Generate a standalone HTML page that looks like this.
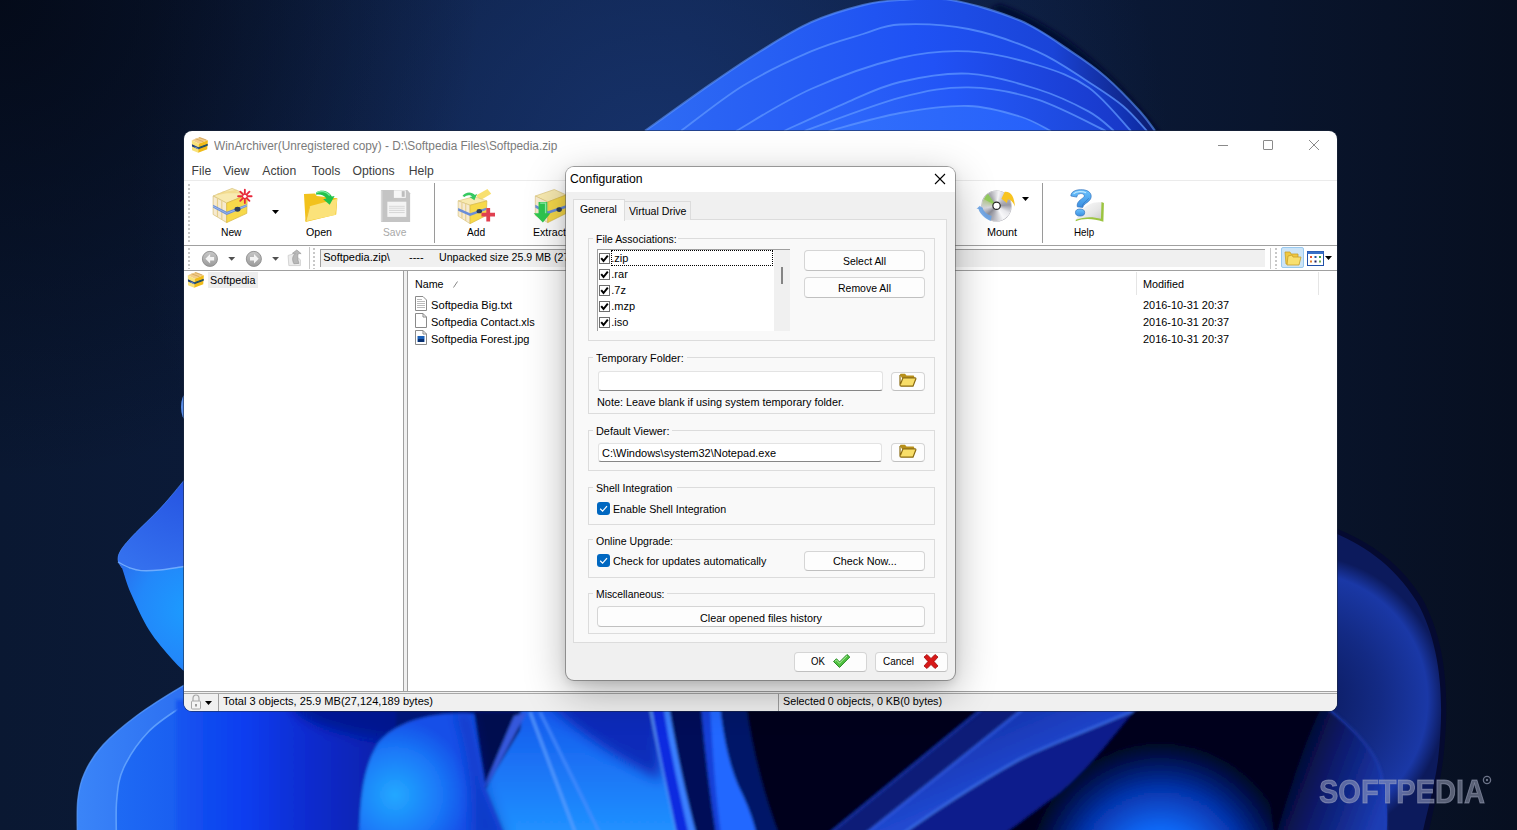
<!DOCTYPE html>
<html><head><meta charset="utf-8">
<style>
*{box-sizing:border-box;margin:0;padding:0}
html,body{width:1517px;height:830px;overflow:hidden;background:#0b1a36}
body{position:relative;font-family:"Liberation Sans",sans-serif;font-size:12px;color:#000}
.a{position:absolute}
.t{position:absolute;white-space:pre;line-height:1;transform-origin:0 0}
</style></head><body>
<svg class="a" style="left:0;top:0" width="1517" height="830" viewBox="0 0 1517 830">
<defs>
<linearGradient id="navy" x1="0" y1="0" x2="1517" y2="0" gradientUnits="userSpaceOnUse"><stop offset="0" stop-color="#0a1832"/><stop offset="0.45" stop-color="#0d1f44"/><stop offset="0.75" stop-color="#0a1834"/><stop offset="1" stop-color="#070f20"/></linearGradient>
<radialGradient id="navyHi" cx="650" cy="170" r="520" gradientUnits="userSpaceOnUse"><stop offset="0" stop-color="#17336c" stop-opacity=".95"/><stop offset="1" stop-color="#17336c" stop-opacity="0"/></radialGradient>
<radialGradient id="navyDk" cx="0" cy="0" r="480" gradientUnits="userSpaceOnUse"><stop offset="0" stop-color="#030815" stop-opacity=".85"/><stop offset="1" stop-color="#030815" stop-opacity="0"/></radialGradient>
<radialGradient id="lobeL" cx="190" cy="610" r="85" gradientUnits="userSpaceOnUse">
<stop offset="0" stop-color="#1c9cff"/><stop offset="0.6" stop-color="#2288fa"/><stop offset="1" stop-color="#2a6cec"/>
</radialGradient>
<radialGradient id="bright1" cx="395" cy="795" r="75" gradientUnits="userSpaceOnUse">
<stop offset="0" stop-color="#22a8ff"/><stop offset="0.6" stop-color="#1a78f8"/><stop offset="1" stop-color="#1450e8"/>
</radialGradient>
<radialGradient id="bright2" cx="1160" cy="840" r="120" gradientUnits="userSpaceOnUse">
<stop offset="0" stop-color="#0a78ff"/><stop offset="0.5" stop-color="#0848d0"/><stop offset="1" stop-color="#041040"/>
</radialGradient>
<radialGradient id="domeR" cx="1300" cy="700" r="145" gradientUnits="userSpaceOnUse"><stop offset="0" stop-color="#0a1858"/><stop offset="0.55" stop-color="#132a84"/><stop offset="0.88" stop-color="#1a38a6"/><stop offset="1" stop-color="#0c1a5c"/></radialGradient>
<filter id="bl1" x="-5%" y="-5%" width="110%" height="110%"><feGaussianBlur stdDeviation="1.5"/></filter>
<filter id="bl2"><feGaussianBlur stdDeviation="2"/></filter>
<filter id="bl6" x="-30%" y="-30%" width="160%" height="160%"><feGaussianBlur stdDeviation="6"/></filter>
<linearGradient id="p1" x1="645" y1="0" x2="1155" y2="0" gradientUnits="userSpaceOnUse"><stop offset="0" stop-color="#2f6cf4"/><stop offset="0.45" stop-color="#2054f2"/><stop offset="0.8" stop-color="#1a44d8"/><stop offset="1" stop-color="#0c1c70"/></linearGradient>
<linearGradient id="p2" x1="681" y1="0" x2="1147" y2="0" gradientUnits="userSpaceOnUse"><stop offset="0" stop-color="#2c66f4"/><stop offset="0.5" stop-color="#1f52f4"/><stop offset="0.85" stop-color="#1a46e0"/><stop offset="1" stop-color="#0e2aa0"/></linearGradient>
<linearGradient id="p3" x1="736" y1="0" x2="1131" y2="0" gradientUnits="userSpaceOnUse"><stop offset="0" stop-color="#2c64f6"/><stop offset="0.5" stop-color="#2152f6"/><stop offset="1" stop-color="#1838c8"/></linearGradient>
<linearGradient id="p4" x1="784" y1="0" x2="1114" y2="0" gradientUnits="userSpaceOnUse"><stop offset="0" stop-color="#2e68f8"/><stop offset="0.5" stop-color="#2254f6"/><stop offset="1" stop-color="#1a40d0"/></linearGradient>
<linearGradient id="p5" x1="804" y1="0" x2="1106" y2="0" gradientUnits="userSpaceOnUse"><stop offset="0" stop-color="#306cfa"/><stop offset="0.5" stop-color="#2458f8"/><stop offset="1" stop-color="#1c46d8"/></linearGradient>
<linearGradient id="p6" x1="828" y1="0" x2="1051" y2="0" gradientUnits="userSpaceOnUse"><stop offset="0" stop-color="#3270fc"/><stop offset="1" stop-color="#2660fa"/></linearGradient>
<filter id="bl05" x="-5%" y="-20%" width="110%" height="140%"><feGaussianBlur stdDeviation=".6"/></filter>
</defs>
<rect width="1517" height="830" fill="url(#navy)"/>
<rect width="1517" height="830" fill="url(#navyHi)"/>
<rect width="1517" height="830" fill="url(#navyDk)"/>
<!-- top dome petals -->
<path d="M1000,4 C1070,30 1120,80 1162,135 L1150,135 C1110,85 1060,40 990,8Z" fill="#040a30" filter="url(#bl2)"/>
<path d="M645.0,131.0 C655.6,123.5 689.3,99.0 708.5,85.7 C727.7,72.4 742.9,62.0 760.0,51.4 C777.1,40.8 793.8,30.0 811.0,22.3 C828.2,14.6 848.2,8.8 863.0,5.1 C877.8,1.4 885.3,0.8 900.0,0.0 C914.7,-0.8 931.0,-3.4 951.0,0.0 C971.0,3.4 1000.0,12.0 1020.0,20.6 C1040.0,29.2 1056.7,42.0 1071.0,51.4 C1085.3,60.8 1094.2,67.0 1105.7,77.0 C1117.2,87.0 1131.8,102.4 1140.0,111.4 C1148.2,120.4 1152.5,127.7 1155.0,131.0 L1155,140 L645,140 Z" fill="url(#p1)"/>
<path d="M645.0,131.0 C655.6,123.5 689.3,99.0 708.5,85.7 C727.7,72.4 742.9,62.0 760.0,51.4 C777.1,40.8 793.8,30.0 811.0,22.3 C828.2,14.6 848.2,8.8 863.0,5.1 C877.8,1.4 885.3,0.8 900.0,0.0 C914.7,-0.8 931.0,-3.4 951.0,0.0 C971.0,3.4 1000.0,12.0 1020.0,20.6 C1040.0,29.2 1056.7,42.0 1071.0,51.4 C1085.3,60.8 1094.2,67.0 1105.7,77.0 C1117.2,87.0 1131.8,102.4 1140.0,111.4 C1148.2,120.4 1152.5,127.7 1155.0,131.0" fill="none" stroke="#5d95ff" stroke-width="2.2" stroke-opacity="0.6" filter="url(#bl05)"/>
<path d="M681.0,131.0 C691.3,123.5 721.3,99.0 743.0,85.7 C764.7,72.4 791.0,60.0 811.0,51.4 C831.0,42.8 848.2,38.5 863.0,34.0 C877.8,29.5 882.4,25.3 900.0,24.5 C917.6,23.7 945.7,24.5 968.5,29.0 C991.3,33.5 1017.0,42.6 1037.0,51.4 C1057.0,60.2 1074.2,72.9 1088.5,82.0 C1102.8,91.1 1113.2,97.8 1123.0,106.0 C1132.8,114.2 1143.0,126.8 1147.0,131.0 L1147,140 L681,140 Z" fill="url(#p2)"/>
<path d="M681.0,131.0 C691.3,123.5 721.3,99.0 743.0,85.7 C764.7,72.4 791.0,60.0 811.0,51.4 C831.0,42.8 848.2,38.5 863.0,34.0 C877.8,29.5 882.4,25.3 900.0,24.5 C917.6,23.7 945.7,24.5 968.5,29.0 C991.3,33.5 1017.0,42.6 1037.0,51.4 C1057.0,60.2 1074.2,72.9 1088.5,82.0 C1102.8,91.1 1113.2,97.8 1123.0,106.0 C1132.8,114.2 1143.0,126.8 1147.0,131.0" fill="none" stroke="#5d95ff" stroke-width="1.8" stroke-opacity="0.75" filter="url(#bl05)"/>
<path d="M736.0,131.0 C748.5,124.0 783.7,101.2 811.0,89.0 C838.3,76.8 873.8,64.3 900.0,58.0 C926.2,51.7 945.7,50.2 968.5,51.4 C991.3,52.6 1017.0,59.0 1037.0,65.0 C1057.0,71.0 1072.8,76.4 1088.5,87.4 C1104.2,98.4 1123.9,123.7 1131.0,131.0 L1131,140 L736,140 Z" fill="url(#p3)"/>
<path d="M736.0,131.0 C748.5,124.0 783.7,101.2 811.0,89.0 C838.3,76.8 873.8,64.3 900.0,58.0 C926.2,51.7 945.7,50.2 968.5,51.4 C991.3,52.6 1017.0,59.0 1037.0,65.0 C1057.0,71.0 1072.8,76.4 1088.5,87.4 C1104.2,98.4 1123.9,123.7 1131.0,131.0" fill="none" stroke="#5d95ff" stroke-width="1.8" stroke-opacity="0.75" filter="url(#bl05)"/>
<path d="M784.0,131.0 C794.3,126.3 826.7,111.0 846.0,102.8 C865.3,94.6 879.6,86.8 900.0,82.0 C920.4,77.2 945.7,72.5 968.5,73.7 C991.3,74.9 1017.0,82.7 1037.0,89.0 C1057.0,95.3 1075.7,104.4 1088.5,111.4 C1101.3,118.4 1109.8,127.7 1114.0,131.0 L1114,140 L784,140 Z" fill="url(#p4)"/>
<path d="M784.0,131.0 C794.3,126.3 826.7,111.0 846.0,102.8 C865.3,94.6 879.6,86.8 900.0,82.0 C920.4,77.2 945.7,72.5 968.5,73.7 C991.3,74.9 1017.0,82.7 1037.0,89.0 C1057.0,95.3 1075.7,104.4 1088.5,111.4 C1101.3,118.4 1109.8,127.7 1114.0,131.0" fill="none" stroke="#5d95ff" stroke-width="1.8" stroke-opacity="0.75" filter="url(#bl05)"/>
<path d="M804.5,131.0 C820.4,125.5 872.7,105.0 900.0,97.7 C927.3,90.4 945.7,87.1 968.5,87.4 C991.3,87.7 1014.1,92.1 1037.0,99.4 C1059.9,106.7 1094.5,125.7 1106.0,131.0 L1106,140 L804.5,140 Z" fill="url(#p5)"/>
<path d="M804.5,131.0 C820.4,125.5 872.7,105.0 900.0,97.7 C927.3,90.4 945.7,87.1 968.5,87.4 C991.3,87.7 1014.1,92.1 1037.0,99.4 C1059.9,106.7 1094.5,125.7 1106.0,131.0" fill="none" stroke="#5d95ff" stroke-width="1.8" stroke-opacity="0.75" filter="url(#bl05)"/>
<path d="M828.5,131.0 C840.4,128.0 876.7,117.2 900.0,113.0 C923.3,108.8 948.5,105.4 968.5,106.0 C988.5,106.6 1006.2,112.3 1020.0,116.5 C1033.8,120.7 1045.8,128.6 1051.0,131.0 L1051,140 L828.5,140 Z" fill="url(#p6)"/>
<path d="M828.5,131.0 C840.4,128.0 876.7,117.2 900.0,113.0 C923.3,108.8 948.5,105.4 968.5,106.0 C988.5,106.6 1006.2,112.3 1020.0,116.5 C1033.8,120.7 1045.8,128.6 1051.0,131.0" fill="none" stroke="#5d95ff" stroke-width="1.8" stroke-opacity="0.75" filter="url(#bl05)"/>
<!-- left upper lobe -->
<radialGradient id="lobeU" cx="190" cy="470" r="110" gradientUnits="userSpaceOnUse"><stop offset="0" stop-color="#2450e0"/><stop offset="1" stop-color="#3470ee"/></radialGradient>
<path d="M190.0,470.0 C189.0,471.7 188.8,474.2 184.0,480.4 C179.2,486.6 170.0,497.8 161.5,507.0 C153.0,516.2 139.6,528.5 132.8,535.7 C126.1,542.9 123.5,546.0 121.0,550.0 C118.5,554.0 117.8,557.0 118.0,560.0 C118.2,563.0 119.9,562.5 122.0,568.0 C124.1,573.5 126.2,582.7 130.7,593.0 C135.2,603.3 142.2,619.0 149.0,630.0 C155.8,641.0 165.9,651.9 171.7,658.7 C177.5,665.5 180.6,667.8 184.0,671.0 C187.4,674.2 190.7,676.8 192.0,678.0 Z" fill="url(#lobeL)"/>
<path d="M190.0,470.0 C189.0,471.7 188.8,474.2 184.0,480.4 C179.2,486.6 170.0,497.8 161.5,507.0 C153.0,516.2 139.6,528.5 132.8,535.7 C126.1,542.9 123.5,546.0 121.0,550.0 C118.5,554.0 117.8,557.0 118.0,560.0 C118.2,563.0 121.3,566.7 122.0,568.0 C120.0,563.0 126.2,566.6 130.0,568.0 C133.8,569.4 136.0,570.3 141.0,570.6 C146.0,570.9 152.8,570.7 160.0,570.0 C167.2,569.3 178.7,567.2 184.0,566.5 C189.3,565.8 190.7,566.1 192.0,566.0 L192,470 Z" fill="url(#lobeU)"/>
<path d="M118.0,562.0 C120.0,563.0 126.2,566.6 130.0,568.0 C133.8,569.4 136.0,570.3 141.0,570.6 C146.0,570.9 152.8,570.7 160.0,570.0 C167.2,569.3 178.7,567.2 184.0,566.5 C189.3,565.8 190.7,566.1 192.0,566.0" stroke="#7ab4ff" stroke-width="1.4" fill="none" opacity=".85"/>
<path d="M184.0,480.4 C180.2,484.8 170.0,497.8 161.5,507.0 C153.0,516.2 139.6,528.5 132.8,535.7 C126.1,542.9 123.5,546.0 121.0,550.0 C118.5,554.0 117.8,557.0 118.0,560.0 C118.2,563.0 121.3,566.7 122.0,568.0" stroke="#4a88f8" stroke-width="1" fill="none" opacity=".6"/>
<ellipse cx="186" cy="407" rx="5" ry="13" fill="#5a8ee8"/>
<!-- left lower lobe -->
<linearGradient id="llo" x1="80" y1="0" x2="200" y2="0" gradientUnits="userSpaceOnUse"><stop offset="0" stop-color="#3a84f8"/><stop offset="1" stop-color="#2a6cf0"/></linearGradient>
<linearGradient id="lli" x1="116" y1="0" x2="260" y2="0" gradientUnits="userSpaceOnUse"><stop offset="0" stop-color="#1e6af4"/><stop offset="1" stop-color="#1450ec"/></linearGradient>
<path d="M200.0,678.0 C197.2,679.3 193.5,679.5 183.0,685.8 C172.5,692.0 150.3,705.6 137.0,715.5 C123.7,725.4 111.7,735.5 103.0,745.0 C94.3,754.5 88.9,763.5 84.7,772.7 C80.5,781.9 79.0,788.8 77.8,800.0 C76.6,811.2 77.5,833.3 77.5,840.0 L200,840 Z" fill="url(#llo)"/>
<path d="M200.0,678.0 C197.2,679.3 193.5,679.5 183.0,685.8 C172.5,692.0 150.3,705.6 137.0,715.5 C123.7,725.4 111.7,735.5 103.0,745.0 C94.3,754.5 88.9,763.5 84.7,772.7 C80.5,781.9 79.0,788.8 77.8,800.0 C76.6,811.2 77.5,833.3 77.5,840.0" stroke="#5a9cff" stroke-width="1.5" fill="none" opacity=".7"/>
<path d="M200.0,698.0 C197.2,699.3 191.6,700.4 183.0,706.0 C174.4,711.6 158.6,721.2 148.7,731.5 C138.8,741.8 128.9,756.6 123.6,768.0 C118.3,779.4 117.9,788.0 116.7,800.0 C115.5,812.0 116.5,833.3 116.5,840.0 L200,840 Z" fill="url(#lli)"/>
<path d="M200.0,698.0 C197.2,699.3 191.6,700.4 183.0,706.0 C174.4,711.6 158.6,721.2 148.7,731.5 C138.8,741.8 128.9,756.6 123.6,768.0 C118.3,779.4 117.9,788.0 116.7,800.0 C115.5,812.0 116.5,833.3 116.5,840.0" stroke="#6aaaff" stroke-width="1.6" fill="none" opacity=".8"/>
<!-- right dome -->
<path d="M1330,526 C1362,538 1397,558 1422,598 C1447,643 1450,700 1443,760 C1439,790 1432,815 1427,840 L1330,840 Z" fill="#050a30"/>
<path d="M1330,531 C1360,543 1393,563 1417,602 C1441,645 1445,700 1438,760 C1434,790 1426,815 1421,840 L1330,840 Z" fill="url(#domeR)"/>
<path d="M1325,705 C1350,725 1375,750 1384,785 C1388,805 1388,820 1386,840 L1325,840 Z" fill="#1234a8"/>
<!-- bottom strip under window -->
<g filter="url(#bl1)">
<rect x="176" y="700" width="1154" height="140" fill="#02041a"/>
<linearGradient id="bs1" x1="180" y1="0" x2="390" y2="0" gradientUnits="userSpaceOnUse"><stop offset="0" stop-color="#1454f0"/><stop offset="0.3" stop-color="#0d3ef0"/><stop offset="0.6" stop-color="#0a2cd0"/><stop offset="1" stop-color="#0720a8"/></linearGradient>
<rect x="176" y="700" width="220" height="140" fill="url(#bs1)"/>
<linearGradient id="topdark" x1="0" y1="705" x2="0" y2="770" gradientUnits="userSpaceOnUse"><stop offset="0" stop-color="#05168a" stop-opacity=".9"/><stop offset="1" stop-color="#05168a" stop-opacity="0"/></linearGradient>
<ellipse cx="430" cy="700" rx="140" ry="40" fill="#05168a" opacity=".85" filter="url(#bl6)"/>
<path d="M359,840 C360,790 365,765 378,743 C390,728 410,720 430,716 C455,712 475,713 482,716 C480,745 484,770 486,789 L507,840 Z" fill="url(#bright1)"/>
<path d="M474,712 L524,712 L486,789 C482,765 478,740 474,712 Z" fill="#030a50"/>
<linearGradient id="pet" x1="0" y1="705" x2="0" y2="830" gradientUnits="userSpaceOnUse"><stop offset="0" stop-color="#1558ec"/><stop offset="1" stop-color="#2090ff"/></linearGradient>
<path d="M524,705 L650,705 L678,840 L507,840 L486,789 Z" fill="url(#pet)"/>
<path d="M545,700 L660,700 L660,780 C620,760 580,735 545,700Z" fill="#0a24b0" opacity=".85" filter="url(#bl6)"/>
<path d="M523,712 L486,789 L496,770 L520,730Z" fill="#020850"/>
<path d="M514,716 L527,712 L488,784 L483,789 Z" fill="#3458dc"/>
<path d="M470,712 C478,750 484,775 486,789 L507,840 L470,840 C475,800 468,750 455,712Z" fill="#0a2ab0" opacity=".55" filter="url(#bl6)"/>
<path d="M530,712 L578,840" stroke="#5aa0ff" stroke-width="2.2"/>
<path d="M540,712 L603,840" stroke="#4a90ff" stroke-width="2"/>
<path d="M650,705 C658,750 668,790 678,840" stroke="#6aaeff" stroke-width="2"/>
<path d="M651,705 L669,705 C676,750 686,795 698,840 L678,840 C668,790 658,750 651,705Z" fill="#0a2ae0"/>
<path d="M663,705 L669,705 C676,750 686,795 698,840 L690,840 C680,795 670,750 663,705Z" fill="#3a80ff"/>
<path d="M669,705 L701,705 C705,750 710,795 717,840 L698,840 C686,795 676,750 669,705Z" fill="#030a58"/>
<path d="M701,705 L720,705 C724,740 730,770 743,795 C750,810 755,825 758,840 L717,840 C710,795 705,750 701,705Z" fill="#2268ff"/>
<path d="M701,705 L710,705 C713,760 716,800 722,840 L717,840 C710,795 705,750 701,705Z" fill="#1440d8"/>
<path d="M720,705 L746,705 C752,750 765,800 781,840 L758,840 C755,825 750,810 743,795 C730,770 724,740 720,705Z" fill="#051468"/>
<path d="M820,840 L985,705 L1028,705 L858,840Z" fill="#0b1a78"/>
<path d="M822,840 L987,705" stroke="#2448c8" stroke-width="1.6" opacity=".8"/>
<linearGradient id="bandBC" x1="1000" y1="700" x2="1030" y2="770" gradientUnits="userSpaceOnUse"><stop offset="0" stop-color="#1430a8"/><stop offset="1" stop-color="#2048d0"/></linearGradient>
<path d="M858,840 L1028,705 L1145,705 L1133,712 C1090,730 1050,745 1020,760 C975,785 930,815 895,840Z" fill="url(#bandBC)"/>
<path d="M858,840 L1028,705" stroke="#3464f0" stroke-width="2" opacity=".9"/>
<path d="M1133,712 C1090,730 1050,745 1020,760 C975,785 930,815 895,840" stroke="#4a84ff" stroke-width="2.6" fill="none"/>
<path d="M895,840 C930,815 975,785 1020,760 C1050,745 1090,730 1133,712 C1110,740 1080,780 1050,800 C1030,815 1010,830 995,840Z" fill="#0a1a8c"/>
<path d="M1133,712 C1110,740 1080,780 1050,800 C1030,815 1010,830 995,840 L1330,840 L1330,705 L1140,705Z" fill="#02041a"/>
<clipPath id="glowclip"><path d="M1133,712 C1110,740 1080,780 1050,800 C1030,815 1010,830 995,840 L1275,840 C1268,800 1268,760 1275,720 L1150,705Z"/></clipPath>
<radialGradient id="glow" cx="1160" cy="875" r="135" gradientUnits="userSpaceOnUse"><stop offset="0" stop-color="#0a7cff"/><stop offset="0.35" stop-color="#0866f4"/><stop offset="0.65" stop-color="#0632a8"/><stop offset="0.9" stop-color="#030c40"/><stop offset="1" stop-color="#02041a"/></radialGradient>
<rect x="990" y="705" width="290" height="135" fill="url(#glow)" clip-path="url(#glowclip)"/>
<linearGradient id="lobeR2" x1="1280" y1="760" x2="1386" y2="800" gradientUnits="userSpaceOnUse"><stop offset="0" stop-color="#02041a"/><stop offset="0.45" stop-color="#0a1a6a"/><stop offset="1" stop-color="#1c3cb4"/></linearGradient>
<path d="M1323,705 C1350,725 1375,748 1381,773 C1386,800 1386,815 1386,840 L1275,840 C1290,790 1305,740 1323,705 Z" fill="url(#lobeR2)"/>
<path d="M1323,705 C1350,725 1375,748 1381,773 C1386,800 1386,815 1386,840" fill="none" stroke="#2a4ac8" stroke-width="1.5" opacity=".7"/>
</g>
</svg>

<div class="a" style="left:183px;top:130px;width:1155px;height:582px;border-radius:9px;background:rgba(30,40,60,.55)"></div>
<div class="a" style="left:184px;top:131px;width:1153px;height:580px;border-radius:8px;background:#fff;overflow:hidden">
</div>
<div class="t" style="left:214.00px;top:139.64px;font-size:12px;color:#7b7b7b;transform:scaleX(0.9861);">WinArchiver(Unregistered copy) - D:\Softpedia Files\Softpedia.zip</div>
<div class="a" style="left:1218px;top:145px;width:10px;height:1px;background:#8a8a8a"></div>
<div class="a" style="left:1263px;top:140px;width:10px;height:10px;border:1px solid #8a8a8a;border-radius:1px"></div>
<svg class="a" style="left:1308px;top:139px;" width="12" height="12" viewBox="0 0 12 12"><path d="M1 1 L11 11 M11 1 L1 11" stroke="#8a8a8a" stroke-width="1"/></svg>
<div class="t" style="left:191.60px;top:164.97px;font-size:12.2px;color:#404040;">File</div>
<div class="t" style="left:223.20px;top:164.97px;font-size:12.2px;color:#404040;">View</div>
<div class="t" style="left:262.30px;top:164.97px;font-size:12.2px;color:#404040;">Action</div>
<div class="t" style="left:311.80px;top:164.97px;font-size:12.2px;color:#404040;">Tools</div>
<div class="t" style="left:352.50px;top:164.97px;font-size:12.2px;color:#404040;">Options</div>
<div class="t" style="left:408.70px;top:164.97px;font-size:12.2px;color:#404040;">Help</div>
<div class="a" style="left:184px;top:180px;width:1153px;height:1px;background:#ebebeb"></div>
<div class="a" style="left:188px;top:184px;width:2px;height:59px;background:repeating-linear-gradient(#c8c8c8 0 2px,transparent 2px 4px)"></div>
<div class="a" style="left:434px;top:183px;width:1px;height:60px;background:#9a9a9a"></div>
<div class="a" style="left:1042px;top:183px;width:1px;height:60px;background:#9a9a9a"></div>
<div class="t" style="left:221.25px;top:227.09px;font-size:11px;color:#000;transform:scaleX(0.9312);">New</div>
<div class="t" style="left:306.00px;top:227.09px;font-size:11px;color:#000;transform:scaleX(0.9658);">Open</div>
<div class="t" style="left:382.60px;top:227.09px;font-size:11px;color:#a8a8a8;transform:scaleX(0.9331);">Save</div>
<div class="t" style="left:466.80px;top:227.09px;font-size:11px;color:#000;transform:scaleX(0.9296);">Add</div>
<div class="t" style="left:532.50px;top:227.09px;font-size:11px;color:#000;transform:scaleX(0.9639);">Extract</div>
<div class="t" style="left:986.55px;top:227.39px;font-size:11px;color:#000;transform:scaleX(0.9844);">Mount</div>
<div class="t" style="left:1073.80px;top:227.39px;font-size:11px;color:#000;transform:scaleX(0.8928);">Help</div>
<svg class="a" style="left:272px;top:210px;" width="7" height="4" viewBox="0 0 7 4"><path d="M0 0 L7 0 L3.5 4Z" fill="#000"/></svg>
<svg class="a" style="left:1022px;top:197px;" width="7" height="4" viewBox="0 0 7 4"><path d="M0 0 L7 0 L3.5 4Z" fill="#000"/></svg>
<svg class="a" style="left:186px;top:133px" width="26" height="24" viewBox="0 0 899 830">
<path d="M200,250 L480,140 L755,255 L440,375 Z" fill="#f2cc88"/>
<path d="M330,200 L600,300 M450,160 L700,240" stroke="#c89850" stroke-width="30" opacity=".7"/>
<path d="M200,250 L440,375 L420,680 L210,600 Z" fill="#f8e27a"/>
<path d="M440,375 L755,255 L735,560 L420,680 Z" fill="#f0bc18"/>
<path d="M205,390 L430,490 L752,372 L748,445 L425,565 L208,470 Z" fill="#1c3c78"/>
<path d="M300,480 L430,545" stroke="#7aa0e8" stroke-width="30"/>
<path d="M430,520 L740,410" stroke="#2a6a50" stroke-width="25"/>
</svg>
<svg class="a" style="left:205px;top:183px" width="50" height="45" viewBox="0 0 922 830">
<path d="M150,240 L500,100 L780,215 L400,370 Z" fill="#f8eab0" stroke="#d9c27a" stroke-width="14"/>
<path d="M230,208 L590,138 M320,172 L680,175" stroke="#efd37a" stroke-width="30" opacity=".6"/>
<path d="M150,240 L400,370 L400,730 L150,580 Z" fill="#f6ead0" stroke="#d9c27a" stroke-width="14"/>
<path d="M230,280 L230,625 M310,325 L310,675" stroke="#e6cf8a" stroke-width="22"/>
<path d="M400,370 L780,215 L770,560 L400,730 Z" fill="#f7d94a" stroke="#d9b840" stroke-width="14"/>
<path d="M150,400 L400,530 L770,390 L770,440 L400,590 L150,455 Z" fill="#6a8ed8"/>
<path d="M150,430 L400,560 L770,415" stroke="#a8c4f0" stroke-width="14" fill="none"/>
<ellipse cx="600" cy="485" rx="55" ry="45" fill="#2c3e5a"/>
<g stroke="#e8283c" stroke-width="34" stroke-linecap="round"><path d="M735,125 L735,370 M610,245 L860,245 M650,160 L820,330 M820,160 L650,330"/></g>
<circle cx="735" cy="245" r="30" fill="#fff"/>
</svg>
<svg class="a" style="left:295px;top:183px" width="50" height="45" viewBox="0 0 922 830">
<path d="M165,205 L370,195 L400,240 L780,280 L760,580 L195,720 Z" fill="#f2c21c"/>
<path d="M270,430 L780,290 L745,590 L200,705 Z" fill="#fbe27a"/>
<path d="M270,430 L200,705" stroke="#f0c030" stroke-width="20"/>
<path d="M390,175 C470,120 620,130 680,250 L730,240 L640,400 L520,300 L580,285 C540,220 460,200 390,215 Z" fill="#22c24a"/>
<path d="M395,180 C470,140 580,150 640,230" stroke="#7ae8a0" stroke-width="25" fill="none"/>
</svg>
<svg class="a" style="left:370px;top:183px" width="50" height="45" viewBox="0 0 922 830">
<path d="M205,130 L690,130 L740,190 L740,720 L205,720 Z" fill="#c4c4c4"/>
<rect x="440" y="135" width="220" height="140" fill="#f6f6f6"/><rect x="585" y="150" width="55" height="105" fill="#bdbdbd"/>
<rect x="320" y="345" width="350" height="280" fill="#f4f4f4"/>
<g stroke="#c8c8c8" stroke-width="12"><path d="M350,430 L640,430 M350,465 L640,465 M350,505 L640,505 M350,545 L640,545"/></g>
<path d="M215,140 L215,710" stroke="#d8d8d8" stroke-width="30"/>
</svg>
<svg class="a" style="left:450px;top:183px" width="50" height="45" viewBox="0 0 922 830">
<path d="M480,230 L690,110 L760,200 L560,320 Z" fill="#f8e070"/>
<path d="M150,330 L450,250 L680,330 L370,410 Z" fill="#f8eab0" stroke="#d9c27a" stroke-width="12"/>
<path d="M150,330 L370,410 L370,750 L150,610 Z" fill="#f6ead0" stroke="#d9c27a" stroke-width="12"/>
<path d="M220,360 L220,650 M290,385 L290,700" stroke="#e6cf8a" stroke-width="20"/>
<path d="M370,410 L680,330 L670,600 L370,750 Z" fill="#f7d94a" stroke="#d9b840" stroke-width="12"/>
<path d="M150,460 L370,560 L670,455 L670,500 L370,610 L150,510 Z" fill="#6a8ed8"/>
<ellipse cx="540" cy="520" rx="50" ry="40" fill="#2c3e5a"/>
<path d="M230,240 C280,160 400,150 460,220 L500,200 L450,320 L360,260 L410,250 C370,210 300,220 270,260 Z" fill="#35c860"/>
<g stroke="#e04050" stroke-width="70"><path d="M705,460 L705,710 M580,585 L830,585"/></g>
</svg>
<svg class="a" style="left:525px;top:183px" width="41" height="45" viewBox="0 0 756 830">
<path d="M190,240 L540,120 L760,220 L420,350 Z" fill="#f8eab0" stroke="#d9c27a" stroke-width="12"/>
<path d="M190,240 L420,350 L420,730 L190,600 Z" fill="#f6ead0" stroke="#d9c27a" stroke-width="12"/>
<path d="M420,350 L760,220 L760,560 L420,730 Z" fill="#f7d94a" stroke="#d9b840" stroke-width="12"/>
<path d="M190,400 L420,520 L760,410 L760,460 L420,570 L190,455 Z" fill="#6a8ed8"/>
<ellipse cx="630" cy="490" rx="50" ry="45" fill="#2c3e5a"/>
<path d="M250,350 L410,350 L410,560 L470,560 L330,730 L160,560 L250,560 Z" fill="#2ec850"/>
<path d="M280,370 L380,370 L380,560" stroke="#90f0a8" stroke-width="25" fill="none"/>
</svg>
<div class="a" style="left:981.7px;top:190.9px;width:29.8px;height:29.8px;border-radius:50%;background:conic-gradient(from 10deg,#f4f4f6 0deg,#b8b8c0 40deg,#9a9aa4 75deg,#e8e8ec 110deg,#f8f8fa 140deg,#b0b0b8 185deg,#8c8c96 215deg,#d8d8de 250deg,#b4c890 290deg,#a8a8b0 320deg,#f4f4f6 360deg);box-shadow:0 0 0 .6px #b0b0b8"></div>
<svg class="a" style="left:970px;top:183px" width="65" height="45" viewBox="0 0 1199 830">
<path d="M490,420 L260,300 A275,275 0 0 1 330,200 Z" fill="#8ad048" opacity=".75"/>
<path d="M150,450 C170,560 260,640 380,700 L400,610 C300,570 250,520 230,450 Z" fill="#6aa4e8" opacity=".9"/>
<path d="M120,480 L180,420 L240,470Z" fill="#6aa4e8" opacity=".8"/>
<path d="M580,290 L640,160 C760,150 820,260 830,440 C800,350 740,300 700,300 L680,370 Z" fill="#f8c420"/>
<circle cx="490" cy="420" r="68" fill="#fff" stroke="#222" stroke-width="22"/>
</svg>
<svg class="a" style="left:1060px;top:183px" width="50" height="45" viewBox="0 0 922 830">
<defs><linearGradient id="bookg" x1="0" y1="0" x2="1" y2="1"><stop offset="0" stop-color="#ffffff"/><stop offset="0.6" stop-color="#e6e6e6"/><stop offset="1" stop-color="#c8c8c8"/></linearGradient>
<linearGradient id="qg" x1="0" y1="0" x2="0" y2="1"><stop offset="0" stop-color="#6cc4ff"/><stop offset="1" stop-color="#3a8ee0"/></linearGradient></defs>
<path d="M290,700 C420,640 600,640 790,700 L780,360 C620,330 500,400 430,470 C380,520 330,600 290,700Z" fill="url(#bookg)"/>
<path d="M290,705 C430,650 600,650 800,715 L810,370 L765,350 L755,660 C600,615 440,620 290,680Z" fill="#9cc440"/>
<path d="M200,240 C200,130 360,110 460,130 C560,150 600,230 560,300 C520,370 430,380 420,450 L320,440 C300,350 380,310 430,270 C470,240 440,190 380,195 C320,200 310,240 310,260 Z" fill="url(#qg)" stroke="#2c6ab8" stroke-width="12"/>
<path d="M410,430 C420,360 500,330 530,280" stroke="#2c6ab8" stroke-width="14" fill="none" opacity=".7"/>
<ellipse cx="370" cy="545" rx="85" ry="65" fill="url(#qg)" stroke="#2c6ab8" stroke-width="12"/>
<path d="M250,200 C300,150 420,150 480,180" stroke="#c0e8ff" stroke-width="22" fill="none"/>
</svg>
<div class="a" style="left:184px;top:245px;width:1153px;height:1px;background:#a0a0a0"></div>
<div class="a" style="left:188px;top:248px;width:2px;height:21px;background:repeating-linear-gradient(#c8c8c8 0 2px,transparent 2px 4px)"></div>
<div class="a" style="left:309px;top:247px;width:1px;height:22px;background:#c8c8c8"></div>
<div class="a" style="left:313px;top:248px;width:2px;height:21px;background:repeating-linear-gradient(#c8c8c8 0 2px,transparent 2px 4px)"></div>
<div class="a" style="left:320px;top:249px;width:945px;height:18px;background:#f0f0f0;border-top:1px solid #a0a0a0;border-left:1px solid #a0a0a0"></div>
<div class="t" style="left:323.20px;top:252.09px;font-size:11px;color:#000;">Softpedia.zip\</div>
<div class="t" style="left:409.00px;top:252.09px;font-size:11px;color:#000;">----</div>
<div class="t" style="left:439.40px;top:252.09px;font-size:11px;color:#000;transform:scaleX(0.9651);">Unpacked size 25.9 MB (27,124,189 bytes)</div>
<div class="a" style="left:1270px;top:248px;width:1px;height:21px;background:#c8c8c8"></div>
<div class="a" style="left:1275px;top:248px;width:2px;height:21px;background:repeating-linear-gradient(#c8c8c8 0 2px,transparent 2px 4px)"></div>
<div class="a" style="left:1281px;top:247px;width:23px;height:21px;background:#cce4f7;border:1px solid #99c9ef;border-radius:2px"></div>
<svg class="a" style="left:1325px;top:256px;" width="7" height="4" viewBox="0 0 7 4"><path d="M0 0 L7 0 L3.5 4Z" fill="#000"/></svg>
<svg class="a" style="left:196px;top:246px" width="110" height="24" viewBox="0 0 1517 331">
<defs><linearGradient id="navg" x1="0" y1="0" x2="0" y2="1"><stop offset="0" stop-color="#c8c8c8"/><stop offset="1" stop-color="#9a9a9a"/></linearGradient></defs>
<circle cx="192" cy="178" r="104" fill="url(#navg)" stroke="#8a8a8a" stroke-width="12"/>
<path d="M130,175 L195,110 L195,150 L250,150 L250,200 L195,200 L195,240 Z" fill="#f4f4f4"/>
<circle cx="798" cy="178" r="104" fill="url(#navg)" stroke="#8a8a8a" stroke-width="12"/>
<path d="M865,175 L800,110 L800,150 L745,150 L745,200 L800,200 L800,240 Z" fill="#f4f4f4"/>
<path d="M445,150 L540,150 L492,205 Z" fill="#505050"/>
<path d="M1050,150 L1145,150 L1098,205 Z" fill="#505050"/>
<path d="M1270,130 L1340,110 L1390,150 L1440,190 L1440,270 L1280,270 Z" fill="#ececec" stroke="#c8c8c8" stroke-width="10"/>
<path d="M1350,245 C1320,190 1330,130 1370,110 L1330,100 L1390,55 L1450,105 L1410,105 C1400,140 1400,190 1420,240 Z" fill="#b8b8b8" stroke="#909090" stroke-width="8"/>
</svg>
<svg class="a" style="left:1283px;top:249px" width="20" height="18" viewBox="0 0 20 18">
<path d="M2 3 L7 3 L8 5 L15 5 L15 15 L3 15 Z" fill="#f0c840" stroke="#c8a028" stroke-width=".8"/>
<path d="M5 7 L9 6 L10 8 L18 8 L16 16 L4 16 Z" fill="#f8e070" stroke="#c8a028" stroke-width=".8"/>
</svg>
<svg class="a" style="left:1307px;top:251px" width="17" height="15" viewBox="0 0 17 15">
<rect x="0.5" y="0.5" width="16" height="14" fill="#fff" stroke="#2050a8"/><rect x="0.5" y="0.5" width="16" height="2.5" fill="#3a70c8"/>
<rect x="3" y="5" width="2" height="2" fill="#e05030"/><rect x="7.5" y="5" width="2" height="2" fill="#2050a8"/><rect x="12" y="5" width="2" height="2" fill="#40a040"/>
<rect x="3" y="9.5" width="2" height="2" fill="#e08030"/><rect x="7.5" y="9.5" width="2" height="2" fill="#202060"/><rect x="12" y="9.5" width="2" height="2" fill="#70b050"/>
</svg>
<svg class="a" style="left:182px;top:268px" width="26" height="24" viewBox="0 0 899 830">
<path d="M200,250 L480,140 L755,255 L440,375 Z" fill="#f2cc88"/>
<path d="M330,200 L600,300 M450,160 L700,240" stroke="#c89850" stroke-width="30" opacity=".7"/>
<path d="M200,250 L440,375 L420,680 L210,600 Z" fill="#f8e27a"/>
<path d="M440,375 L755,255 L735,560 L420,680 Z" fill="#f0bc18"/>
<path d="M205,390 L430,490 L752,372 L748,445 L425,565 L208,470 Z" fill="#1c3c78"/>
<path d="M300,480 L430,545" stroke="#7aa0e8" stroke-width="30"/>
<path d="M430,520 L740,410" stroke="#2a6a50" stroke-width="25"/>
</svg>
<div class="a" style="left:184px;top:270px;width:1153px;height:1px;background:#a0a0a0"></div>
<div class="a" style="left:403px;top:271px;width:1px;height:420px;background:#a0a0a0"></div>
<div class="a" style="left:404px;top:271px;width:3px;height:420px;background:#f0f0f0"></div>
<div class="a" style="left:407px;top:271px;width:1px;height:420px;background:#a0a0a0"></div>
<div class="a" style="left:208px;top:272px;width:50px;height:16px;background:#ededed"></div>
<div class="t" style="left:209.60px;top:274.99px;font-size:11px;color:#000;transform:scaleX(0.9788);">Softpedia</div>
<div class="t" style="left:414.60px;top:278.99px;font-size:11px;color:#000;transform:scaleX(0.9712);">Name</div>
<svg class="a" style="left:453px;top:281px;" width="5" height="7" viewBox="0 0 5 7"><path d="M0.5 6.5 L4.5 0.5" stroke="#888" stroke-width="1"/></svg>
<div class="a" style="left:1136px;top:272px;width:1px;height:23px;background:#e5e5e5"></div>
<div class="a" style="left:1318px;top:272px;width:1px;height:23px;background:#e5e5e5"></div>
<div class="t" style="left:1142.50px;top:278.99px;font-size:11px;color:#000;transform:scaleX(0.9861);">Modified</div>
<div class="t" style="left:430.60px;top:299.79px;font-size:11px;color:#000;transform:scaleX(1.0136);">Softpedia Big.txt</div>
<div class="t" style="left:1143.30px;top:299.79px;font-size:11px;color:#000;transform:scaleX(0.9924);">2016-10-31 20:37</div>
<div class="t" style="left:430.60px;top:316.79px;font-size:11px;color:#000;transform:scaleX(0.9985);">Softpedia Contact.xls</div>
<div class="t" style="left:1143.30px;top:316.79px;font-size:11px;color:#000;transform:scaleX(0.9924);">2016-10-31 20:37</div>
<div class="t" style="left:430.60px;top:333.79px;font-size:11px;color:#000;transform:scaleX(0.9995);">Softpedia Forest.jpg</div>
<div class="t" style="left:1143.30px;top:333.79px;font-size:11px;color:#000;transform:scaleX(0.9924);">2016-10-31 20:37</div>
<svg class="a" style="left:415px;top:296px" width="12" height="15" viewBox="0 0 12 15">
<path d="M0.5 0.5 L8 0.5 L11.5 4 L11.5 14.5 L0.5 14.5 Z" fill="#fff" stroke="#8a8a8a"/>
<g stroke="#a8a8a8" stroke-width=".8"><path d="M2 3.5 L7 3.5 M2 5.5 L10 5.5 M2 7.5 L10 7.5 M2 9.5 L10 9.5 M2 11.5 L10 11.5"/></g>
</svg>
<svg class="a" style="left:415px;top:313px" width="12" height="15" viewBox="0 0 12 15">
<path d="M0.5 0.5 L8 0.5 L11.5 4 L11.5 14.5 L0.5 14.5 Z" fill="#fff" stroke="#8a8a8a"/><path d="M8 0.5 L8 4 L11.5 4" fill="none" stroke="#8a8a8a"/>
</svg>
<svg class="a" style="left:415px;top:330px" width="12" height="15" viewBox="0 0 12 15">
<path d="M0.5 0.5 L8 0.5 L11.5 4 L11.5 14.5 L0.5 14.5 Z" fill="#fff" stroke="#8a8a8a"/><path d="M8 0.5 L8 4 L11.5 4" fill="none" stroke="#8a8a8a"/>
<rect x="2.5" y="6" width="7" height="6" fill="#1a60b8"/><rect x="3" y="9" width="6" height="3" fill="#0a3070"/>
</svg>
<div class="a" style="left:184px;top:691px;width:1153px;height:1px;background:#a0a0a0"></div>
<div class="a" style="left:184px;top:692px;width:1153px;height:19px;background:#f0f0f0;border-radius:0 0 8px 8px"></div>
<div class="a" style="left:184px;top:693px;width:1153px;height:1px;background:#a8a8a8"></div>
<div class="a" style="left:217.5px;top:694px;width:1.0px;height:17px;background:#a0a0a0"></div>
<div class="a" style="left:778px;top:694px;width:1px;height:17px;background:#a0a0a0"></div>
<svg class="a" style="left:204.8px;top:701px;" width="7" height="4" viewBox="0 0 7 4"><path d="M0 0 L7 0 L3.5 4Z" fill="#000"/></svg>
<div class="t" style="left:223.20px;top:696.29px;font-size:11px;color:#000;transform:scaleX(1.0042);">Total 3 objects, 25.9 MB(27,124,189 bytes)</div>
<div class="t" style="left:782.80px;top:696.19px;font-size:11px;color:#000;transform:scaleX(0.9781);">Selected 0 objects, 0 KB(0 bytes)</div>
<svg class="a" style="left:190px;top:694px" width="12" height="16" viewBox="0 0 12 16">
<path d="M3 7 L3 4.5 C3 2 4.5 1 6 1 C7.5 1 9 2 9 4.5 L9 7" fill="none" stroke="#a8a8a8" stroke-width="1.2"/>
<rect x="1.5" y="7" width="9" height="8" rx="1" fill="#f4f4f4" stroke="#a8a8a8"/><rect x="5.2" y="10" width="1.6" height="2.5" fill="#888"/>
</svg>
<div class="a" style="left:566px;top:167px;width:389px;height:513px;border-radius:8px;background:#f0f0f0;box-shadow:0 0 0 1px rgba(90,90,90,.55),0 12px 42px rgba(0,0,0,.30),0 3px 10px rgba(0,0,0,.12);overflow:hidden">
<div class="a" style="left:0;top:0;width:389px;height:25px;background:#fff"></div>
</div>
<div class="t" style="left:569.80px;top:173.27px;font-size:12.2px;color:#000;transform:scaleX(1.0014);">Configuration</div>
<svg class="a" style="left:934px;top:173px;" width="12" height="12" viewBox="0 0 12 12"><path d="M1 1 L11 11 M11 1 L1 11" stroke="#000" stroke-width="1.1"/></svg>
<div class="a" style="left:573px;top:219px;width:374px;height:424px;background:#f9f9f9;border:1px solid #dcdcdc"></div>
<div class="a" style="left:624px;top:201px;width:67px;height:19px;background:#f0f0f0;border:1px solid #dcdcdc;border-bottom:none"></div>
<div class="a" style="left:573px;top:199px;width:52px;height:22px;background:#f9f9f9;border:1px solid #dcdcdc;border-bottom:none"></div>
<div class="t" style="left:579.50px;top:203.67px;font-size:11.5px;color:#000;transform:scaleX(0.9017);">General</div>
<div class="t" style="left:628.80px;top:205.77px;font-size:11.5px;color:#000;transform:scaleX(0.9212);">Virtual Drive</div>
<div class="a" style="left:588px;top:238px;width:347px;height:103px;border:1px solid #dcdcdc"></div>
<div class="a" style="left:593px;top:232px;width:85px;height:14px;background:#f9f9f9"></div>
<div class="t" style="left:595.80px;top:233.89px;font-size:11px;color:#000;transform:scaleX(0.9496);">File Associations:</div>
<div class="a" style="left:597px;top:249px;width:193px;height:82px;background:#fff;border-top:1px solid #a0a0a0;border-left:1px solid #a0a0a0"></div>
<div class="a" style="left:774px;top:250px;width:16px;height:81px;background:#f0f0f0"></div>
<div class="a" style="left:781px;top:267px;width:2px;height:17px;background:#858585"></div>
<div class="a" style="left:611px;top:250px;width:162px;height:16px;border:1px dotted #000"></div>
<div class="a" style="left:599px;top:253px;width:11px;height:11px;background:#fff;border:1px solid #6e6e6e"></div>
<svg class="a" style="left:599px;top:253px;" width="11" height="11" viewBox="0 0 11 11"><path d="M2.2 5.2 L4.5 8 L8.8 2.6" stroke="#000" stroke-width="2" fill="none"/></svg>
<div class="t" style="left:611.30px;top:253.49px;font-size:11px;color:#000;">.zip</div>
<div class="a" style="left:599px;top:269px;width:11px;height:11px;background:#fff;border:1px solid #6e6e6e"></div>
<svg class="a" style="left:599px;top:269px;" width="11" height="11" viewBox="0 0 11 11"><path d="M2.2 5.2 L4.5 8 L8.8 2.6" stroke="#000" stroke-width="2" fill="none"/></svg>
<div class="t" style="left:611.30px;top:269.49px;font-size:11px;color:#000;">.rar</div>
<div class="a" style="left:599px;top:285px;width:11px;height:11px;background:#fff;border:1px solid #6e6e6e"></div>
<svg class="a" style="left:599px;top:285px;" width="11" height="11" viewBox="0 0 11 11"><path d="M2.2 5.2 L4.5 8 L8.8 2.6" stroke="#000" stroke-width="2" fill="none"/></svg>
<div class="t" style="left:611.30px;top:285.49px;font-size:11px;color:#000;">.7z</div>
<div class="a" style="left:599px;top:301px;width:11px;height:11px;background:#fff;border:1px solid #6e6e6e"></div>
<svg class="a" style="left:599px;top:301px;" width="11" height="11" viewBox="0 0 11 11"><path d="M2.2 5.2 L4.5 8 L8.8 2.6" stroke="#000" stroke-width="2" fill="none"/></svg>
<div class="t" style="left:611.30px;top:301.49px;font-size:11px;color:#000;">.mzp</div>
<div class="a" style="left:599px;top:317px;width:11px;height:11px;background:#fff;border:1px solid #6e6e6e"></div>
<svg class="a" style="left:599px;top:317px;" width="11" height="11" viewBox="0 0 11 11"><path d="M2.2 5.2 L4.5 8 L8.8 2.6" stroke="#000" stroke-width="2" fill="none"/></svg>
<div class="t" style="left:611.30px;top:317.49px;font-size:11px;color:#000;">.iso</div>
<div class="a" style="left:804px;top:250px;width:121px;height:21px;background:#fdfdfd;border:1px solid #d5d5d5;border-bottom-color:#c0c0c0;border-radius:4px"></div>
<div class="t" style="left:843.00px;top:256.29px;font-size:11px;color:#000;transform:scaleX(0.9503);">Select All</div>
<div class="a" style="left:804px;top:277px;width:121px;height:21px;background:#fdfdfd;border:1px solid #d5d5d5;border-bottom-color:#c0c0c0;border-radius:4px"></div>
<div class="t" style="left:838.00px;top:283.49px;font-size:11px;color:#000;transform:scaleX(0.9525);">Remove All</div>
<div class="a" style="left:588px;top:357px;width:347px;height:57px;border:1px solid #dcdcdc"></div>
<div class="a" style="left:593px;top:351px;width:94px;height:14px;background:#f9f9f9"></div>
<div class="t" style="left:596.00px;top:353.39px;font-size:11px;color:#000;transform:scaleX(0.9825);">Temporary Folder:</div>
<div class="a" style="left:597.5px;top:371px;width:285.5px;height:20px;background:#fff;border:1px solid #e3e3e3;border-bottom:1px solid #868686;border-radius:3px"></div>
<div class="a" style="left:891px;top:372px;width:34px;height:19px;background:#fdfdfd;border:1px solid #d5d5d5;border-bottom-color:#c0c0c0;border-radius:4px"></div>
<div class="t" style="left:596.50px;top:397.29px;font-size:11px;color:#000;transform:scaleX(0.9877);">Note: Leave blank if using system temporary folder.</div>
<div class="a" style="left:588px;top:430px;width:347px;height:41px;border:1px solid #dcdcdc"></div>
<div class="a" style="left:593px;top:424px;width:79px;height:14px;background:#f9f9f9"></div>
<div class="t" style="left:595.50px;top:426.29px;font-size:11px;color:#000;transform:scaleX(0.9880);">Default Viewer:</div>
<div class="a" style="left:597.5px;top:442.5px;width:284.5px;height:19.0px;background:#fff;border:1px solid #e3e3e3;border-bottom:1px solid #868686;border-radius:3px"></div>
<div class="t" style="left:601.60px;top:447.89px;font-size:11px;color:#000;transform:scaleX(0.9986);">C:\Windows\system32\Notepad.exe</div>
<div class="a" style="left:891px;top:443px;width:34px;height:19px;background:#fdfdfd;border:1px solid #d5d5d5;border-bottom-color:#c0c0c0;border-radius:4px"></div>
<svg class="a" style="left:899px;top:373px" width="18" height="14" viewBox="0 0 18 14">
<path d="M1 2 C1 1.2 1.5 0.8 2.2 0.8 L6 0.8 L7.5 2.5 L14 2.5 C14.8 2.5 15.2 3 15.2 3.8 L15.2 5 L3 5 Z" fill="#b8901a"/>
<path d="M1 2 L1 12 C1 12.8 1.5 13.2 2.2 13.2 L14 13.2 L16.8 6 C17 5.3 16.6 4.8 16 4.8 L4 4.8 L1.5 11" fill="#f8de68" stroke="#8a6a10" stroke-width="1.2"/>
</svg>
<svg class="a" style="left:899px;top:444px" width="18" height="14" viewBox="0 0 18 14">
<path d="M1 2 C1 1.2 1.5 0.8 2.2 0.8 L6 0.8 L7.5 2.5 L14 2.5 C14.8 2.5 15.2 3 15.2 3.8 L15.2 5 L3 5 Z" fill="#b8901a"/>
<path d="M1 2 L1 12 C1 12.8 1.5 13.2 2.2 13.2 L14 13.2 L16.8 6 C17 5.3 16.6 4.8 16 4.8 L4 4.8 L1.5 11" fill="#f8de68" stroke="#8a6a10" stroke-width="1.2"/>
</svg>
<div class="a" style="left:588px;top:487px;width:347px;height:38px;border:1px solid #dcdcdc"></div>
<div class="a" style="left:593px;top:481px;width:84px;height:14px;background:#f9f9f9"></div>
<div class="t" style="left:595.50px;top:483.29px;font-size:11px;color:#000;transform:scaleX(0.9623);">Shell Integration</div>
<div class="a" style="left:597px;top:502px;width:13px;height:13px;background:#0067c0;border-radius:3px"></div>
<svg class="a" style="left:597px;top:502px;" width="13" height="13" viewBox="0 0 13 13"><path d="M3.2 6.8 L5.6 9.1 L10 4.2" stroke="#fff" stroke-width="1.2" fill="none"/></svg>
<div class="t" style="left:612.70px;top:504.09px;font-size:11px;color:#000;transform:scaleX(0.9691);">Enable Shell Integration</div>
<div class="a" style="left:588px;top:539px;width:347px;height:39px;border:1px solid #dcdcdc"></div>
<div class="a" style="left:593px;top:533px;width:80px;height:14px;background:#f9f9f9"></div>
<div class="t" style="left:595.50px;top:535.89px;font-size:11px;color:#000;transform:scaleX(0.9612);">Online Upgrade:</div>
<div class="a" style="left:597px;top:554px;width:13px;height:13px;background:#0067c0;border-radius:3px"></div>
<svg class="a" style="left:597px;top:554px;" width="13" height="13" viewBox="0 0 13 13"><path d="M3.2 6.8 L5.6 9.1 L10 4.2" stroke="#fff" stroke-width="1.2" fill="none"/></svg>
<div class="t" style="left:612.70px;top:555.89px;font-size:11px;color:#000;transform:scaleX(0.9794);">Check for updates automatically</div>
<div class="a" style="left:804px;top:551px;width:121px;height:20px;background:#fdfdfd;border:1px solid #d5d5d5;border-bottom-color:#c0c0c0;border-radius:4px"></div>
<div class="t" style="left:832.60px;top:555.89px;font-size:11px;color:#000;transform:scaleX(0.9844);">Check Now...</div>
<div class="a" style="left:588px;top:593px;width:347px;height:41px;border:1px solid #dcdcdc"></div>
<div class="a" style="left:593px;top:587px;width:74px;height:14px;background:#f9f9f9"></div>
<div class="t" style="left:595.50px;top:589.49px;font-size:11px;color:#000;transform:scaleX(0.9414);">Miscellaneous:</div>
<div class="a" style="left:597px;top:606px;width:328px;height:21px;background:#fdfdfd;border:1px solid #d5d5d5;border-bottom-color:#c0c0c0;border-radius:4px"></div>
<div class="t" style="left:700.00px;top:612.79px;font-size:11px;color:#000;transform:scaleX(0.9829);">Clear opened files history</div>
<div class="a" style="left:794px;top:651.5px;width:73px;height:20.5px;background:#fdfdfd;border:1px solid #d5d5d5;border-bottom-color:#c0c0c0;border-radius:4px"></div>
<div class="t" style="left:810.70px;top:656.19px;font-size:11px;color:#000;transform:scaleX(0.8739);">OK</div>
<div class="a" style="left:875px;top:651.5px;width:73px;height:20.5px;background:#fdfdfd;border:1px solid #d5d5d5;border-bottom-color:#c0c0c0;border-radius:4px"></div>
<div class="t" style="left:882.70px;top:656.19px;font-size:11px;color:#000;transform:scaleX(0.9051);">Cancel</div>
<svg class="a" style="left:832px;top:653px" width="19" height="16" viewBox="0 0 19 16">
<path d="M1.5 8.5 L4.5 5.8 L7.5 9 L15 1.5 L17.8 4 L7.5 14.5 Z" fill="#50c040" stroke="#2a8a28" stroke-width="1"/>
<path d="M3 8.3 L4.5 7 L7.5 10.2 L15 2.8" stroke="#b0f0a0" stroke-width="1" fill="none"/>
</svg>
<svg class="a" style="left:922px;top:653px" width="18" height="17" viewBox="0 0 18 17">
<path d="M2 4 L5 1.5 L9 5.5 L13 1.5 L16 4 L12 8.5 L16 13 L13 15.5 L9 11.5 L5 15.5 L2 13 L6 8.5 Z" fill="#d81818" stroke="#a00808" stroke-width=".8"/>
</svg>
<div class="t" style="left:1319px;top:774.7px;font-size:33px;font-weight:bold;color:rgba(170,176,200,.5);-webkit-text-stroke:1px rgba(170,176,200,.5);transform:scaleX(.879)">SOFTPEDIA</div>
<svg class="a" style="left:1482px;top:775px" width="10" height="10" viewBox="0 0 10 10"><circle cx="5" cy="5" r="3.6" fill="none" stroke="rgba(175,182,205,.6)" stroke-width="1.3"/><circle cx="5" cy="5" r="1.2" fill="rgba(175,182,205,.6)"/></svg>

</body></html>
